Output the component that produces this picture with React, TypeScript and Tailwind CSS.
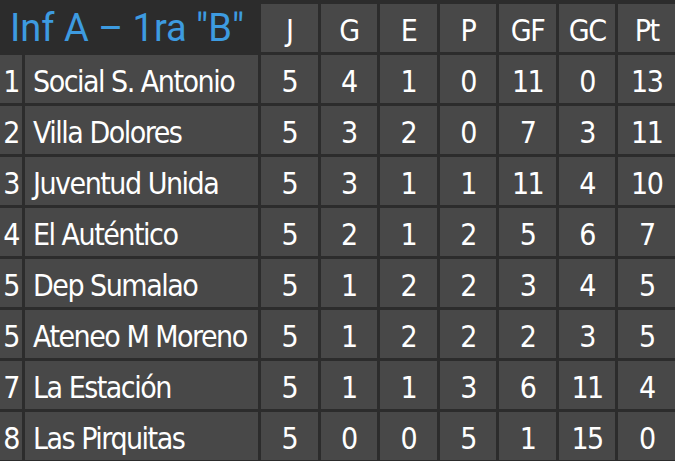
import React from "react";

const rows: (string | number)[][] = [
  [1, "Social S. Antonio", 5, 4, 1, 0, 11, 0, 13],
  [2, "Villa Dolores", 5, 3, 2, 0, 7, 3, 11],
  [3, "Juventud Unida", 5, 3, 1, 1, 11, 4, 10],
  [4, "El Auténtico", 5, 2, 1, 2, 5, 6, 7],
  [5, "Dep Sumalao", 5, 1, 2, 2, 3, 4, 5],
  [5, "Ateneo M Moreno", 5, 1, 2, 2, 2, 3, 5],
  [7, "La Estación", 5, 1, 1, 3, 6, 11, 4],
  [8, "Las Pirquitas", 5, 0, 0, 5, 1, 15, 0],
];

const heads = ["J", "G", "E", "P", "GF", "GC", "Pt"];

const cond = { fontFamily: '"Liberation Sans Narrow", "DejaVu Sans Condensed", "Liberation Sans", sans-serif' };

export default function App() {
  return (
    <div className="w-[675px] h-[461px] bg-[#2c2c2c] overflow-hidden pt-[4px]">
      <div
        className="grid grid-cols-[22px_233px_repeat(7,1fr)] auto-rows-[48px] gap-[3px] text-white text-[30px] tracking-[-1.5px]"
        style={cond}
      >
        <div
          className="col-span-2 flex items-center pl-[10px] text-[#3d9be0] text-[38px] tracking-normal"
          style={{ fontFamily: 'Roboto, "Liberation Sans", sans-serif' }}
        >
          Inf A – 1ra "B"
        </div>
        {heads.map((h) => (
          <div key={h} className="bg-[#484848] flex items-center justify-center pt-[4px]">
            {h}
          </div>
        ))}
        {rows.map((r, i) => (
          <React.Fragment key={i}>
            {r.map((c, j) => (
              <div
                key={j}
                className={
                  "bg-[#484848] flex items-center pt-[4px] " +
                  (j === 1 ? "justify-start pl-[8px] whitespace-nowrap" : "justify-center")
                }
              >
                {c}
              </div>
            ))}
          </React.Fragment>
        ))}
      </div>
    </div>
  );
}
